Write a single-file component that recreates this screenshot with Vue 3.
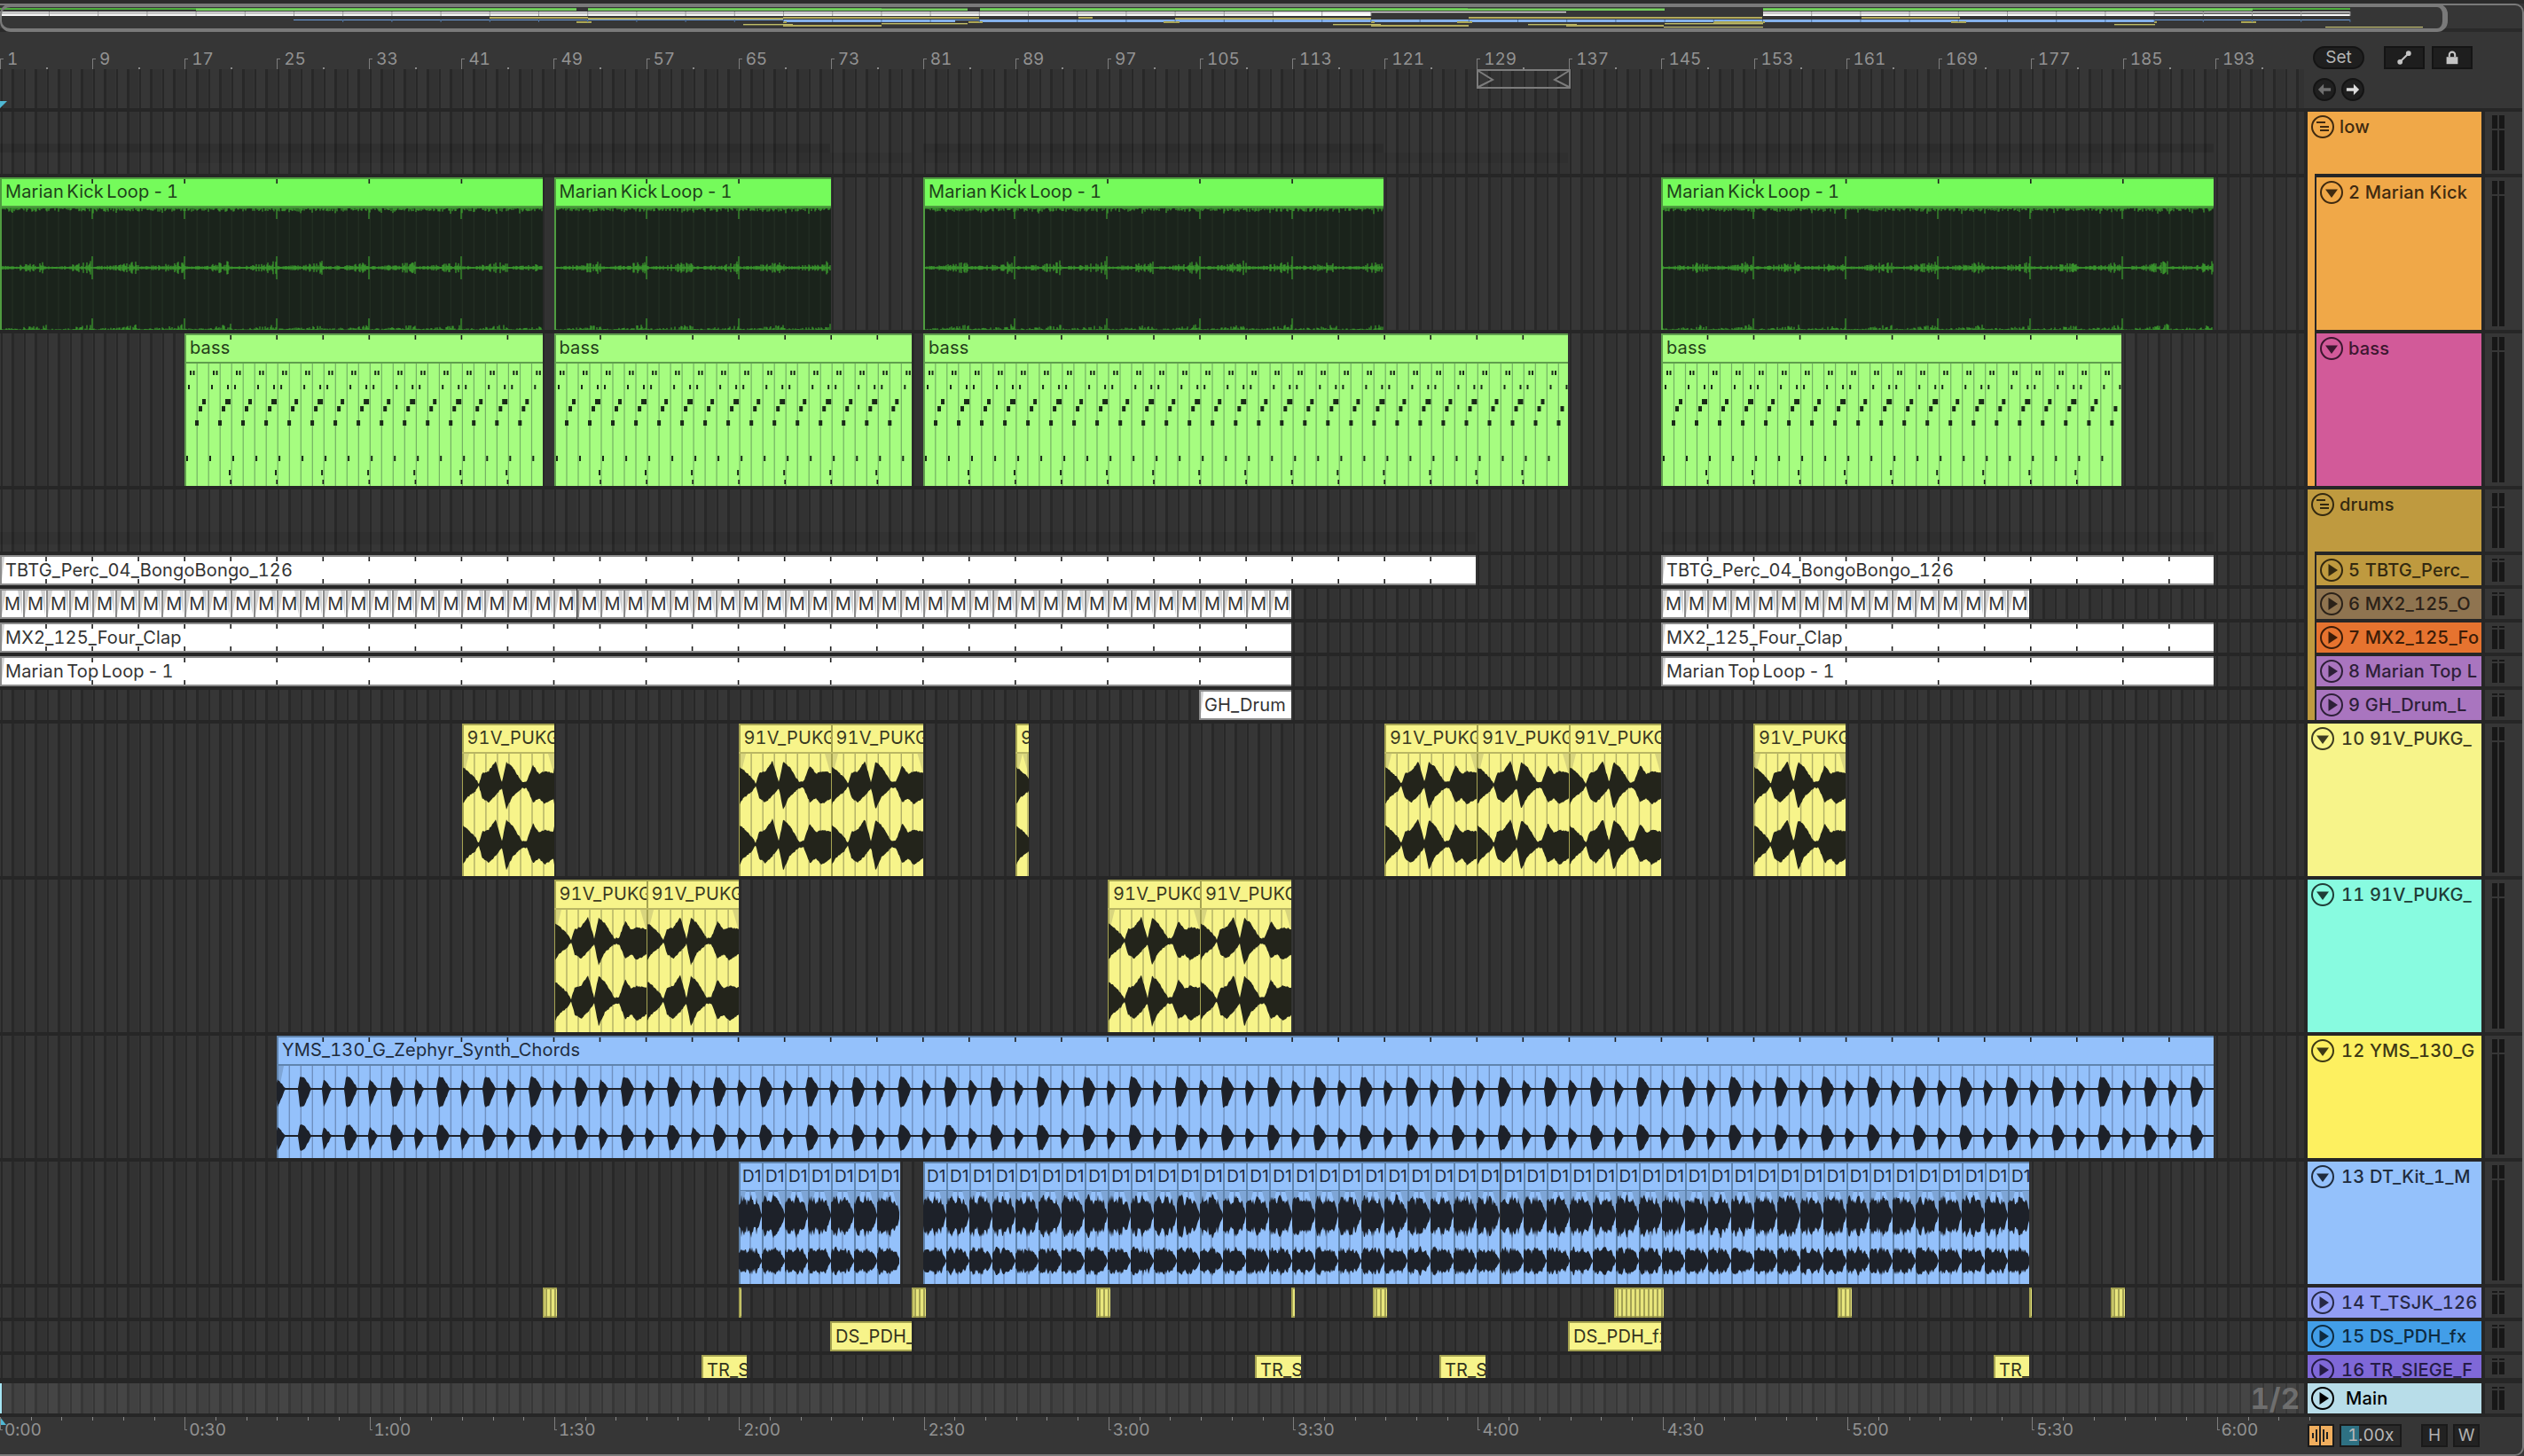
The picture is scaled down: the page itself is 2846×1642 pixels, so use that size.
<script setup>
const BAR = 13.01
const hash = (i) => { const s = Math.sin(i * 12.9898) * 43758.5453; return s - Math.floor(s) }
const lerpTable = (tb, t) => {
  for (let i = 1; i < tb.length; i++) {
    if (t <= tb[i][0]) {
      const a = tb[i - 1], b = tb[i], k = (t - a[0]) / (b[0] - a[0] || 1)
      return [a[1] + (b[1] - a[1]) * k, a[2] + (b[2] - a[2]) * k]
    }
  }
  return [tb[tb.length - 1][1], tb[tb.length - 1][2]]
}

const gridPath = (left, w, y1, y2) => {
  let d = ''
  const first = Math.ceil(left / BAR)
  for (let n = first; n * BAR < left + w; n++) {
    const x = n * BAR - left + 1
    if (x > 1.5 && x < w - 0.5) d += `M${x.toFixed(1)} ${y1}V${y2}`
  }
  return d
}
const tickPath = (left, w, step, h, both) => {
  let d = ''
  const first = Math.ceil((left + 4) / step)
  for (let n = first; n * step < left + w - 2; n++) {
    const x = n * step - left
    d += `M${x.toFixed(1)} 2v5`
    if (both) d += `M${x.toFixed(1)} ${h - 7}v5`
  }
  return d
}
const kickSpikes = (left, w) => {
  let d = ''
  for (let x = 2; x < w; x += 1) {
    const g = left + x
    const big = (g + 1) % 104.08 < 1
    const bar = g % 13.01 < 1
    const swell = Math.pow((g % 52.04) / 52.04, 2) * 7
    const h1 = hash(g), h2 = hash(g + 7), h3 = hash(g + 3)
    const t = big ? 13 : 0.8 + h1 * h1 * 4 + (bar ? 2.5 : 0)
    const m = big ? 13 : 0.8 + h2 * h2 * (1.2 + swell)
    const b = big ? 13 : 0.2 + h3 * h3 * (1.5 + swell * 0.8)
    d += `M${x} 34v${t.toFixed(1)}M${x} ${(102 - m).toFixed(1)}V${(102 + m).toFixed(1)}M${x} 172v${(-b).toFixed(1)}`
  }
  return d
}
const bassNotes = (left, w) => {
  const items = [
    [6, 42, 2, 5, 26], [9.5, 42, 2, 5, 26], [12, 98, 4, 6, 26], [16, 82, 4, 6, 26], [2, 138, 2, 6, 26],
    [4, 58, 2, 5, 52], [30, 58, 2, 5, 52], [48, 58, 2, 5, 52], [20, 74, 4, 6, 52], [46, 74, 6, 6, 52], [50, 154, 2, 6, 52]
  ]
  let d = ''
  for (const it of items) {
    const per = it[4] === 26 ? 26.02 : 52.04
    for (let n = 0; n * per < w; n++) {
      const x = n * per + it[0]
      if (x + it[2] < w) d += `M${x.toFixed(1)} ${it[1]}h${it[2]}v${it[3]}h${-it[2]}z`
    }
  }
  return d
}
const pukTable = [[0, 20, 23], [5, 17, 15], [15, 7, 7], [19, 0.5, 0.5], [23, 13, 15], [30, 15, 20], [38, 27, 12], [45, 2, 3], [50, 26, 28], [57, 20, 13], [68, 2, 3], [73, 3, 3], [80, 22, 20], [87, 12, 15], [93, 15, 22], [104, 13, 15]]
const pukWave = (left, w, c, scale) => {
  const up = [], dn = []
  for (let x = 1; x <= w; x += 1) {
    const g = left + x
    const [a, b] = lerpTable(pukTable, (g % 104.08))
    const ja = hash(g + c) * 1.6, jb = hash(g + c + 9) * 1.6
    up.push(`${x} ${(c - a * scale - ja).toFixed(1)}`)
    dn.unshift(`${x} ${(c + b * scale + jb).toFixed(1)}`)
  }
  return `M${up.join('L')}L${dn.join('L')}Z`
}
const synthWave = (left, w, c, ua, da) => {
  const up = [], dn = []
  for (let x = 0; x <= w; x += 1) {
    const g = left + x
    const p = (g + 1) % 52.04
    let a = 1.1, b = 1.1
    if (p < 10) {
      const e = p < 1.5 ? p / 1.5 : Math.max(0, 1 - (p - 1.5) / 8.5)
      a = 1.1 + ua * e * 0.75; b = 1.1 + da * e
    } else if (p >= 25 && p < 40) {
      const q = p - 25
      const e = q < 2 ? q / 2 : q < 7 ? 1 - (q - 2) * 0.02 : Math.max(0, 0.9 - (q - 7) / 8)
      a = 1.1 + ua * e; b = 1.1 + da * e
    }
    const j = a > 3 ? hash(g + c) * 1.4 : 0
    up.push(`${x} ${(c - a - j).toFixed(1)}`)
    dn.unshift(`${x} ${(c + b + j).toFixed(1)}`)
  }
  return `M${up.join('L')}L${dn.join('L')}Z`
}
const drumWave = (left, w, c, ua, da) => {
  const up = [], dn = []
  for (let x = 0; x <= w; x += 1) {
    const g = left + x
    const t = x / 26
    const e = t > 0.78 ? Math.max(0, (1 - t) / 0.22) * 0.85 + 0.05 : 0.72 + 0.28 * Math.abs(Math.sin(t * 9))
    const j = 0.62 + hash(g * 3 + c) * 0.38
    up.push(`${x} ${(c - ua * e * j).toFixed(1)}`)
    dn.unshift(`${x} ${(c + da * e * j).toFixed(1)}`)
  }
  return `M${up.join('L')}L${dn.join('L')}Z`
}

const kick = (l, r) => ({ kind: 'kick', l, r, text: 'Marian Kick Loop - 1' })
const bass = (l, r) => ({ kind: 'bass', l, r, text: 'bass' })
const white = (l, r, text, tick) => ({ kind: 'white', l, r, text, tick })
const puk = (l, r) => ({ kind: 'puk', l, r, text: '91V_PUKG' })
const tiny = (l, r) => ({ kind: 'tiny', l, r, text: '' })
const sy = (l, r, text) => ({ kind: 'sy', l, r, text })
const slices = (l, r, step, fn) => { const o = []; for (let x = l; x < r - 1; x += step) o.push(fn(x, Math.min(x + step, r))); return o }

const rawRows = [
  { name: 'low', color: '#f0a848', ink: '#3f2a10', h: 70, icon: 'group', clips: [
    { kind: 'sum1', l: 0, r: 612 }, { kind: 'sum1', l: 624, r: 936 }, { kind: 'sum1', l: 1041, r: 1560 }, { kind: 'sum1', l: 1873, r: 2496 },
    { kind: 'sum2', l: 208, r: 612 }, { kind: 'sum2', l: 624, r: 1028 }, { kind: 'sum2', l: 1041, r: 1768 }, { kind: 'sum2', l: 1873, r: 2392 }
  ] },
  { name: '2 Marian Kick', color: '#f0a848', ink: '#3f2a10', h: 172, icon: 'down', child: '#f0a848', clips: [kick(0, 612), kick(624.5, 936.5), kick(1041, 1560), kick(1873, 2496)] },
  { name: 'bass', color: '#d25a99', ink: '#3d1730', h: 172, icon: 'down', child: '#f0a848', clips: [bass(208, 612), bass(624.5, 1028), bass(1041, 1768), bass(1873, 2392)] },
  { name: 'drums', color: '#bf9a3f', ink: '#332910', h: 70, icon: 'group', clips: [
    { kind: 'sum3', l: 0, r: 1664 }, { kind: 'sum3', l: 1873, r: 2496 }
  ] },
  { name: '5 TBTG_Perc_', color: '#bf9a3f', ink: '#332910', h: 34, icon: 'play', child: '#bf9a3f', clips: [white(0, 1664, 'TBTG_Perc_04_BongoBongo_126', 52.04), white(1873, 2496, 'TBTG_Perc_04_BongoBongo_126', 52.04)] },
  { name: '6 MX2_125_O', color: '#8f7450', ink: '#2a2118', h: 34, icon: 'play', child: '#bf9a3f', clips: [...slices(0, 1456, 26.02, (a, b) => ({ kind: 'm', l: a, r: b, text: 'M' })), ...slices(1873, 2288, 26.02, (a, b) => ({ kind: 'm', l: a, r: b, text: 'M' }))] },
  { name: '7 MX2_125_Fo', color: '#e6732f', ink: '#3c1c08', h: 34, icon: 'play', child: '#bf9a3f', clips: [white(0, 1456, 'MX2_125_Four_Clap', 52.04), white(1873, 2496, 'MX2_125_Four_Clap', 52.04)] },
  { name: '8 Marian Top L', color: '#a975bf', ink: '#2d1f38', h: 34, icon: 'play', child: '#bf9a3f', clips: [white(0, 1456, 'Marian Top Loop - 1', 104.08), white(1873, 2496, 'Marian Top Loop - 1', 104.08)] },
  { name: '9 GH_Drum_L', color: '#a975bf', ink: '#2d1f38', h: 34, icon: 'play', child: '#bf9a3f', clips: [white(1352, 1456, 'GH_Drum', 0)] },
  { name: '10 91V_PUKG_', color: '#f7f48a', ink: '#3c3b20', h: 172, icon: 'down', clips: [puk(520.5, 624.5), puk(832.5, 936.5), puk(936.5, 1041), puk(1145, 1160), puk(1561, 1665), puk(1665, 1769), puk(1769, 1873), puk(1977, 2081)] },
  { name: '11 91V_PUKG_', color: '#88fbe0', ink: '#1f3d37', h: 172, icon: 'down', clips: [puk(624.5, 728.5), puk(728.5, 832.5), puk(1249, 1353), puk(1353, 1456)] },
  { name: '12 YMS_130_G', color: '#fdf060', ink: '#3d3915', h: 138, icon: 'down', clips: [sy(312, 2496, 'YMS_130_G_Zephyr_Synth_Chords')] },
  { name: '13 DT_Kit_1_M', color: '#94c1fb', ink: '#1f2c3d', h: 138, icon: 'down', clips: [...slices(833, 1015, 26.02, (a, b) => ({ kind: 'dt', l: a, r: b, text: 'D1' })), ...slices(1041, 2288, 26.02, (a, b) => ({ kind: 'dt', l: a, r: b, text: 'D1' }))] },
  { name: '14 T_TSJK_126', color: '#929ef5', ink: '#262945', h: 34, icon: 'play', clips: [tiny(612, 628), tiny(833, 836), tiny(1028, 1044), tiny(1236, 1252), tiny(1456, 1460), tiny(1548, 1564), tiny(1820, 1876), tiny(2072, 2088), tiny(2288, 2291), tiny(2380, 2396)] },
  { name: '15 DS_PDH_fx', color: '#429ee8', ink: '#0e2b40', h: 34, icon: 'play', clips: [{ kind: 'tag', l: 936, r: 1028, text: 'DS_PDH_' }, { kind: 'tag', l: 1768, r: 1873, text: 'DS_PDH_fx' }] },
  { name: '16 TR_SIEGE_F', color: '#7f68d8', ink: '#241b45', h: 26, icon: 'play', cut: true, clips: [{ kind: 'tag', l: 791, r: 842, text: 'TR_S' }, { kind: 'tag', l: 1415, r: 1467, text: 'TR_S' }, { kind: 'tag', l: 1623, r: 1675, text: 'TR_S' }, { kind: 'tag', l: 2248, r: 2288, text: 'TR_' }] },
  { name: 'Main', color: '#b8dde9', ink: '#000', h: 34, icon: 'play', main: true, clips: [] }
]

const buildClip = (c, h) => {
  const w = c.r - c.l
  const o = { ...c, w, paths: [] }
  const add = (d, cls) => { if (d) o.paths.push({ d, cls }) }
  if (c.kind === 'kick') {
    add(gridPath(c.l, w, 34, h), 'kg')
    add(kickSpikes(c.l, w), 'ks')
    add(tickPath(c.l, w, 104.08, h, false), 'tick')
  } else if (c.kind === 'bass') {
    add(gridPath(c.l, w, 34, h), 'bg')
    add(bassNotes(c.l, w), 'note')
    add(tickPath(c.l, w, 52.04, h, true), 'tick')
  } else if (c.kind === 'white') {
    if (c.tick) add(tickPath(c.l, w, c.tick, h, true), 'tick')
    add('M2 2h3L2 28z', 'wf')
  } else if (c.kind === 'm') {
    add(`M2 2h5L2 30z`, 'wf')
    add(`M${w - 6} 2h5v28z`, 'wf')
  } else if (c.kind === 'puk') {
    add(`M2 34h6l-6 24zM${w} 34h-7l7 24z`, 'yf')
    add(gridPath(c.l, w, 34, h), 'yg')
    add(pukWave(c.l, w, 69, 0.96), 'dark')
    add(pukWave(c.l, w, 136, 1.02), 'dark')
  } else if (c.kind === 'sy') {
    add('M2 34h6l-6 30z', 'sf')
    add(gridPath(c.l, w, 34, h), 'sg')
    add(synthWave(c.l, w, 60, 12, 19), 'dark2')
    add(synthWave(c.l, w, 113, 11, 15), 'dark2')
    add(tickPath(c.l, w, 52.04, h, false), 'tick')
  } else if (c.kind === 'dt') {
    add(`M2 33h6l-6 26zM${w} 33h-8l8 30z`, 'sf')
    add(`M13 33V${h}`, 'sg')
    add(drumWave(c.l, w, 60.5, 24, 26), 'dark2')
    add(drumWave(c.l, w, 112, 17, 17), 'dark2')
  } else if (c.kind === 'tiny') {
    let d = ''
    for (let x = 4; x < w - 1; x += 5) d += `M${x.toFixed(1)} 2V34`
    add(d, 'tl')
  }
  return o
}
const rows = rawRows.map((r) => ({ ...r, clips: r.clips.map((c) => buildClip(c, r.cut ? 34 : r.h)) }))

const bars = []
for (let b = 1; b <= 193; b += 8) bars.push({ label: String(b), x: (b - 1) * BAR })
const minor = bars.map((b) => b.x + 52)
const times = []
for (let i = 0; i <= 12; i++) times.push({ label: `${Math.floor(i / 2)}:${i % 2 ? '30' : '00'}`, x: i * 208.3 })
const tminor = []
for (let i = 1; i <= 75; i++) if (i % 6) tminor.push(i * 34.72)

const ov = []
const R = (x1, x2, y1, y2, f) => ov.push({ x: x1, y: y1, w: x2 - x1, h: y2 - y1, f })
;[[0, 650], [663, 994], [1105, 1655], [1988, 2650]].forEach(([a, b]) => R(a, b, 9, 11, '#4cab3c'))
;[[221, 650], [663, 1091], [1105, 1877], [1988, 2540]].forEach(([a, b]) => R(a, b, 9.5, 12, '#74d05e'))
R(0, 1766, 13, 14.3, '#e9e9e9'); R(1988, 2650, 13, 14.3, '#efefef')
R(0, 1546, 14.3, 16, '#cfcfcf'); R(1988, 2429, 14.3, 16, '#d5d5d5'); R(2429, 2650, 14.3, 16, '#6f6f6f')
R(0, 1546, 16, 17, '#f2f2f2'); R(1988, 2650, 16, 17, '#f2f2f2')
R(0, 1546, 17, 18, '#f8f8f8'); R(1988, 2650, 17, 18, '#ffffff')
R(1436, 1546, 14.5, 18, '#ffffff')
;[[552, 663], [883, 1104], [1216, 1232], [1656, 1987], [2099, 2210]].forEach(([a, b]) => R(a, b, 19, 21, '#b2aa5c'))
;[[663, 883], [1325, 1546]].forEach(([a, b]) => R(a, b, 20, 22, '#b2aa5c'))
R(331, 2650, 22, 23, '#6c9fe0')
;[[883, 1077], [1105, 2429]].forEach(([a, b]) => R(a, b, 22, 25, '#84b1ec'))
;[[650, 667], [883, 887], [1092, 1108], [1312, 1330], [1546, 1550], [1643, 1660], [1932, 1990], [2200, 2217], [2429, 2432], [2527, 2544]].forEach(([a, b]) => R(a, b, 24, 26, '#aca756'))
;[[994, 1091], [1877, 1988]].forEach(([a, b]) => { R(a, b, 26, 26.8, '#f2ee86'); R(a, b, 26.8, 27.6, '#8f8c48') })
;[[838, 894], [1503, 1557], [1723, 1778], [2384, 2430]].forEach(([a, b]) => { R(a, b, 27, 27.8, '#f2ee86'); R(a, b, 27.8, 28.6, '#8f8c48') })
;[[883, 994], [1546, 1656], [1766, 1876]].forEach(([a, b]) => R(a, b, 28, 30, '#b2aa5c'))
;[[1876, 1988], [2622, 2732]].forEach(([a, b]) => R(a, b, 30, 31.2, '#c6c274'))
for (let x = 55; x < 2650; x += 55.2) {
  if (x < 1546 || x > 1988) R(x, x + 1, 13, 18, '#9a9a9a')
  if (x > 331) R(x, x + 1, 22, 25, '#50749f')
}
const px = (n) => `${n}px`
</script>

<template>
  <div class="app">
    <section class="overview">
      <svg class="ov" width="2846" height="36">
        <rect v-for="(r, i) in ov" :key="i" :x="r.x" :y="r.y" :width="r.w" :height="r.h" :fill="r.f" />
      </svg>
      <div class="ovframe"></div>
    </section>

    <section class="top">
      <div class="topleft">
        <div class="ruler">
          <template v-for="b in bars" :key="b.label">
            <i class="brk" :style="{ left: px(b.x) }"></i>
            <span class="barlabel" :style="{ left: px(b.x + 8) }">{{ b.label }}</span>
          </template>
          <i v-for="m in minor" :key="m" class="dot" :style="{ left: px(m) }"></i>
        </div>
        <div class="lane zero">
          <div class="playmark"></div>
          <div class="brace">
            <svg width="106" height="22"><path d="M2 2l16 10L2 20M104 2L88 12l16 8" /></svg>
          </div>
        </div>
      </div>
      <div class="tools">
        <div class="toolrow">
          <div class="setbtn">Set</div>
          <div class="sqbtn link"><svg width="16" height="16" viewBox="0 0 20 20"><path d="M4 16L16 4" /><circle cx="4" cy="16" r="3.6" /><circle cx="16" cy="4" r="3.6" /></svg></div>
          <div class="sqbtn lockb"><svg width="16" height="16" viewBox="0 0 20 20"><rect x="2" y="9" width="16" height="10" /><path class="arc" d="M6 9V6a4 4 0 0 1 8 0v3" /></svg></div>
        </div>
        <div class="toolrow second">
          <div class="arrow dim"><svg width="16" height="16" viewBox="0 0 18 18"><path d="M8 2L1 9l7 7V11h9V7H8z" /></svg></div>
          <div class="arrow"><svg width="16" height="16" viewBox="0 0 18 18"><path d="M10 2l7 7-7 7V11H1V7h9z" /></svg></div>
        </div>
      </div>
    </section>

    <section class="tracks">
      <div v-for="r in rows" :key="r.name" class="row" :class="{ cut: r.cut }" :style="{ height: px(r.h) }">
        <div class="lane" :class="{ mainlane: r.main }">
          <div v-for="(c, i) in r.clips" :key="i" class="clip" :class="c.kind" :style="{ left: px(c.l), width: px(c.w) }">
            <div v-if="c.kind === 'kick'" class="kbody"></div>
            <div v-if="c.text" class="cap">{{ c.text }}</div>
            <svg v-if="c.paths.length" class="art" :width="c.w" :height="r.cut ? 34 : r.h">
              <path v-for="(p, j) in c.paths" :key="j" :d="p.d" :class="p.cls" />
            </svg>
          </div>
          <div v-if="r.main" class="cue"></div>
          <div v-if="r.main" class="page">1/2</div>
        </div>
        <div class="head" :class="{ nested: r.child, mainhead: r.main }" :style="{ background: r.color, color: r.ink }">
          <i v-if="r.child" class="strip" :style="{ background: r.child }"></i>
          <svg class="ico" width="26" height="26" viewBox="-13 -13 26 26">
            <circle r="12" />
            <path v-if="r.icon === 'group'" class="ln" d="M-7 -5H3M-3 0H7M-3 4H7" />
            <path v-else-if="r.icon === 'down'" class="fl" d="M-7 -3.5H7L0 6z" />
            <path v-else class="fl" d="M-3.5 -7L7 0L-3.5 7z" />
          </svg>
          <span class="tname" :class="{ num: !r.child && r.icon !== 'group' && !r.main }">{{ r.name }}</span>
        </div>
        <div class="mix">
          <div class="meter"><i class="mt" :class="{ big: r.h > 60 }"></i><i class="mb"></i></div>
          <div class="meter"><i class="mt" :class="{ big: r.h > 60 }"></i><i class="mb"></i></div>
        </div>
      </div>
    </section>

    <section class="bottom">
      <div class="timeline">
        <i class="cue2"></i>
        <i v-for="t in tminor" :key="t" class="tm" :style="{ left: px(t) }"></i>
        <template v-for="t in times" :key="t.label">
          <i class="tbrk" :style="{ left: px(t.x) }"></i>
          <span class="tlabel" :style="{ left: px(t.x + 5) }">{{ t.label }}</span>
        </template>
      </div>
      <div class="tools2">
        <div class="wavebtn"><svg width="24" height="22" viewBox="0 0 24 22"><path d="M3 8v6M7 4v14M11 0v22M15 4v14M19 7v8" /></svg></div>
        <div class="speed"><i class="fillbar"></i><span>1.00x</span></div>
        <div class="hw hbtn">H</div>
        <div class="hw">W</div>
      </div>
    </section>
    <div class="winframe"></div>
  </div>
</template>

<style>
html, body { margin: 0; background: #262626; }
</style>

<style scoped>
.app {
  width: 2846px; height: 1642px; background: #262626; position: relative; overflow: hidden;
  font-family: Inter, "Liberation Sans", sans-serif; display: flex; flex-direction: column;
  font-variant-numeric: tabular-nums;
}
.overview { height: 36px; position: relative; flex: none; background: linear-gradient(#2b2b2b 0 4px, #363636 4px 32px, #2a2a2a 32px); }
.ov { position: absolute; inset: 0; display: block; }
.ovframe {
  position: absolute; left: 0; top: 4px; width: 2760px; height: 32px; box-sizing: border-box;
  border: 4px solid #7a7a7a; border-left-width: 2px; border-right-width: 6px; border-radius: 12px;
}
.top { display: flex; height: 86px; flex: none; background: #363636; }
.topleft { width: 2598px; flex: none; display: flex; flex-direction: column; }
.ruler { height: 42px; position: relative; flex: none; background: #363636; }
.brk { position: absolute; top: 30px; width: 4px; height: 12px; box-sizing: border-box; border-left: 1.5px solid #7d7d7d; border-top: 1.5px solid #7d7d7d; }
.barlabel { position: absolute; top: 19px; line-height: 24px; font-size: 19px; color: #929292; letter-spacing: -0.1px; }
.dot { position: absolute; top: 40px; width: 2px; height: 2px; background: #8a8a8a; }
.lane {
  position: relative; overflow: hidden; flex: 0 0 2598px; width: 2598px; height: 100%;
  background-color: #353535;
  background-image: repeating-linear-gradient(90deg, #353535 0 1px, #282828 1px 3px, #363636 3px 13.01px, #282828 13.01px 16.01px, #323232 16.01px 26.02px);
}
.zero { height: 44px; flex: none; }
.playmark { position: absolute; left: 0; top: 36px; width: 0; height: 0; border-top: 8px solid #4fb8d4; border-right: 8px solid transparent; }
.brace { position: absolute; left: 1665px; top: 0; width: 106px; height: 22px; box-sizing: border-box; border: 2px solid #7c7c7c; border-top-width: 2px; }
.brace svg { position: absolute; left: -2px; top: -2px; }
.brace path { fill: none; stroke: #7c7c7c; stroke-width: 2; }
.tools { flex: 1; padding: 16px 0 0 10px; }
.toolrow { display: flex; align-items: center; height: 26px; }
.toolrow.second { margin-top: 10px; gap: 6px; }
.setbtn {
  width: 58px; height: 26px; box-sizing: border-box; border: 2px solid #141414; border-radius: 13px;
  background: #1f1f1f; color: #b4b4b4; font-size: 19px; line-height: 22px; text-align: center;
}
.sqbtn { width: 46px; height: 26px; box-sizing: border-box; border: 2px solid #141414; background: #1e1e1e; display: flex; align-items: center; justify-content: center; }
.link { margin-left: 22px; }
.lockb { margin-left: 8px; }
.link path { stroke: #c4c4c4; stroke-width: 2.6; fill: none; }
.link circle { fill: #c4c4c4; }
.lockb rect { fill: #c4c4c4; }
.lockb .arc { fill: none; stroke: #c4c4c4; stroke-width: 2.6; }
.arrow { width: 26px; height: 26px; box-sizing: border-box; border-radius: 50%; background: #1f1f1f; border: 2px solid #141414; display: flex; align-items: center; justify-content: center; }
.arrow path { fill: #dcdcdc; }
.arrow.dim path { fill: #6e6e6e; }

.tracks { margin-top: 4px; flex: none; display: flex; flex-direction: column; gap: 4px; }
.row { display: flex; flex: none; }
.row.cut { margin-bottom: 2px; }
.head {
  position: relative; width: 196px; margin-left: 4px; flex: none; box-sizing: border-box;
  padding: 4px 0 0 4px; display: flex; align-items: flex-start; font-size: 20px; font-weight: 500; letter-spacing: 0.2px; overflow: hidden; white-space: nowrap;
}
.head.nested { width: 186px; margin-left: 14px; padding-left: 4px; overflow: visible; }
.strip { position: absolute; left: -10px; top: -4px; bottom: 0; width: 8px; }
.ico { flex: none; display: block; }
.ico circle { fill: none; stroke: currentColor; stroke-width: 2; }
.ln { fill: none; stroke: currentColor; stroke-width: 2.2; }
.fl { fill: currentColor; }
.tname { margin-left: 6px; line-height: 27px; }
.tname.num { margin-left: 8px; }
.nested .tname { margin-left: 6px; overflow: hidden; }
.mainhead .tname { margin-left: 13px; }
.row.cut .head { overflow: hidden; }
.mix { width: 44px; margin-left: 4px; flex: none; background: #363636; display: flex; gap: 2px; padding: 4px 0 4px 8px; box-sizing: border-box; }
.meter { width: 6px; display: flex; flex-direction: column; gap: 2px; }
.mt { display: block; height: 2px; background: #171717; flex: none; }
.mt.big { height: 15px; }
.mb { display: block; flex: 1; background: #171717; }

.clip { position: absolute; top: 0; height: 100%; box-sizing: border-box; overflow: hidden; }
.art { position: absolute; left: 0; top: 0; display: block; }
.cap { position: relative; height: 32px; line-height: 33px; padding-left: 6px; font-size: 20px; letter-spacing: 0.15px; word-spacing: -2.2px; white-space: nowrap; overflow: hidden; box-sizing: border-box; }

.kick { background: #75fb5b; color: #1e421a; box-shadow: inset 2px 2px 0 #4f9c40; }
.kbody { position: absolute; left: 2px; right: 0; top: 34px; bottom: 0; background: #1a231b; }
.kick .cap, .bass .cap { border-bottom: 2px solid #4f9c40; height: 34px; }
.kg { stroke: #222d22; stroke-width: 1.5; fill: none; }
.ks { stroke: #42b833; stroke-width: 1; fill: none; }
.tick { stroke: #1c1c1c; stroke-width: 1.6; fill: none; }

.bass { background: #a6fd80; color: #23401a; box-shadow: inset 2px 2px 0 #5f9e4d; }
.bass .cap { border-bottom-color: #5f9e4d; }
.bg { stroke: #74b263; stroke-width: 1.2; fill: none; }
.note { fill: #1a2a18; }

.white, .m { background: #fff; color: #343434; box-shadow: inset 2px 2px 0 #8c8c8c, inset 0 -2px 0 #8c8c8c; }
.white .cap, .m .cap { height: 34px; line-height: 35px; }
.wf { fill: #d2d2d2; }
.m .cap { position: relative; z-index: 1; padding-left: 5px; }

.puk { background: #f7f48a; color: #3a3a22; box-shadow: inset 2px 2px 0 #a5a352; }
.puk .cap { border-bottom: 2px solid #b9b663; height: 34px; }
.yf { fill: #d8d57e; }
.yg { stroke: #b0ae66; stroke-width: 1.4; fill: none; }
.dark { fill: #23241b; }
.dark2 { fill: #1d2129; }

.sy, .dt { background: #94c1fb; color: #1f2c3d; box-shadow: inset 2px 2px 0 #6084ad; }
.sy .cap, .dt .cap { border-bottom: 2px solid #6084ad; height: 34px; }
.dt .cap { padding-left: 4px; font-variant-numeric: normal; font-size: 19px; letter-spacing: 0; }
.sf { fill: #7ea5d6; }
.sg { stroke: #6f90bf; stroke-width: 1.4; fill: none; }

.tiny { background: #e8e67c; box-shadow: inset 2px 2px 0 #a5a352, inset 0 -2px 0 #a5a352; }
.tl { stroke: #8c8a48; stroke-width: 1.5; fill: none; }
.tag { background: #f7f48a; color: #34341e; box-shadow: inset 2px 2px 0 #a5a352, inset 0 -2px 0 #a5a352; height: 34px; }
.tag .cap { height: 34px; line-height: 35px; }

.sum1 { top: 36px; height: 10px; background: rgba(0,0,0,.1); }
.sum2 { top: 46px; height: 12px; background: rgba(0,0,0,.05); }
.sum3 { top: 48px; height: 14px; background: rgba(0,0,0,.06); }

.mainlane {
  background-color: #444;
  background-image: repeating-linear-gradient(90deg, #444 0 1px, #373737 1px 3px, #454545 3px 13.01px, #373737 13.01px 16.01px, #414141 16.01px 26.02px);
}
.cue { position: absolute; left: 0; top: 0; width: 2px; height: 100%; background: #a6e6f5; }
.page { position: absolute; right: 5px; top: 0; font-size: 33px; line-height: 34px; font-weight: 700; color: #6e6e6e; }

.bottom { height: 44px; margin-top: 4px; flex: none; display: flex; background: #363636; }
.timeline { width: 2598px; position: relative; flex: none; }
.cue2 { position: absolute; left: 0; top: 0; width: 0; height: 0; border-bottom: 9px solid #4fb8d4; border-right: 7px solid transparent; }
.tm { position: absolute; top: 0; width: 1px; height: 4px; background: #8a8a8a; }
.tbrk { position: absolute; top: 0; width: 3px; height: 15px; box-sizing: border-box; border-left: 1.5px solid #7d7d7d; border-bottom: 1.5px solid #7d7d7d; }
.tlabel { position: absolute; top: 3px; line-height: 24px; font-size: 19px; color: #929292; letter-spacing: -0.1px; }
.tools2 { display: flex; padding: 8px 0 0 4px; }
.wavebtn { width: 30px; height: 26px; box-sizing: border-box; background: #f0ae5e; border: 2px solid #1a1a1a; display: flex; align-items: center; justify-content: center; }
.wavebtn path { stroke: #222; stroke-width: 2; fill: none; }
.speed { position: relative; width: 70px; height: 26px; margin-left: 6px; box-sizing: border-box; border: 2px solid #1a1a1a; background: #2a2a2a; color: #b8b8b8; font-size: 19px; line-height: 22px; padding-left: 7px; }
.speed span { position: relative; }
.fillbar { position: absolute; left: 0; top: 0; bottom: 0; width: 20px; background: #2e7183; }
.hw { width: 30px; height: 26px; box-sizing: border-box; border: 2px solid #1a1a1a; background: #222; color: #b0b0b0; font-size: 19px; line-height: 22px; text-align: center; margin-left: 6px; }
.hbtn { margin-left: 22px; }
.winframe { position: absolute; left: 0; top: 4px; right: 0; bottom: 0; box-sizing: border-box; border: 2px solid #7a7a7a; border-left: 0; border-radius: 0 10px 10px 0; pointer-events: none; }
</style>
